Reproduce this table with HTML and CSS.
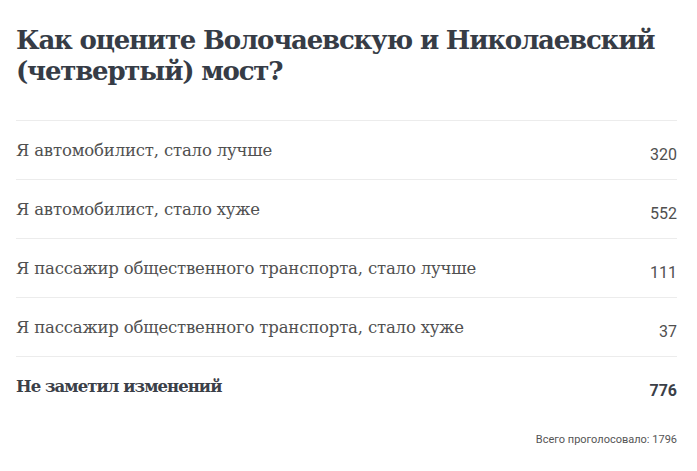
FILE: index.html
```html
<!DOCTYPE html>
<html lang="ru">
<head>
<meta charset="utf-8">
<title>Опрос</title>
<link rel="stylesheet" href="styles.css">
</head>
<body>
<div class="poll">
  <h1 class="poll-title">Как оцените Волочаевскую и Николаевский<br>(четвертый) мост?</h1>
  <ul class="poll-list">
    <li class="poll-row"><span class="poll-label">Я автомобилист, стало лучше</span><span class="poll-count">320</span></li>
    <li class="poll-row"><span class="poll-label">Я автомобилист, стало хуже</span><span class="poll-count">552</span></li>
    <li class="poll-row"><span class="poll-label">Я пассажир общественного транспорта, стало лучше</span><span class="poll-count">111</span></li>
    <li class="poll-row"><span class="poll-label">Я пассажир общественного транспорта, стало хуже</span><span class="poll-count">37</span></li>
    <li class="poll-row poll-row--winner"><span class="poll-label">Не заметил изменений</span><span class="poll-count">776</span></li>
  </ul>
  <div class="poll-total">Всего проголосовало: 1796</div>
</div>
</body>
</html>
```
FILE: styles.css
```css
html, body {
  margin: 0;
  padding: 0;
  background: #ffffff;
}

.poll {
  padding: 25px 20px 0 16px;
}

.poll-title {
  margin: 0;
  font-family: "DejaVu Serif", serif;
  font-weight: bold;
  font-size: 26px;
  line-height: 31px;
  letter-spacing: -1.2px;
  color: #363c46;
  white-space: nowrap;
}

.poll-list {
  list-style: none;
  margin: 33px 0 0 0;
  padding: 0;
}

.poll-row {
  display: flex;
  align-items: center;
  justify-content: space-between;
  height: 58px;
  border-top: 1px solid #ececec;
}

.poll-label {
  font-family: "DejaVu Serif", serif;
  font-size: 16.5px;
  letter-spacing: -0.18px;
  color: #505050;
}

.poll-count {
  margin-top: 8px;
  font-family: Roboto, "Liberation Sans", sans-serif;
  font-size: 16px;
  color: #505050;
}

.poll-row--winner .poll-label {
  font-weight: bold;
  letter-spacing: -0.95px;
  color: #3b4048;
}

.poll-row--winner .poll-count {
  font-weight: bold;
  color: #3b4048;
}

.poll-total {
  margin-top: 18px;
  text-align: right;
  font-family: Roboto, "Liberation Sans", sans-serif;
  font-size: 11px;
  color: #555555;
}
```
